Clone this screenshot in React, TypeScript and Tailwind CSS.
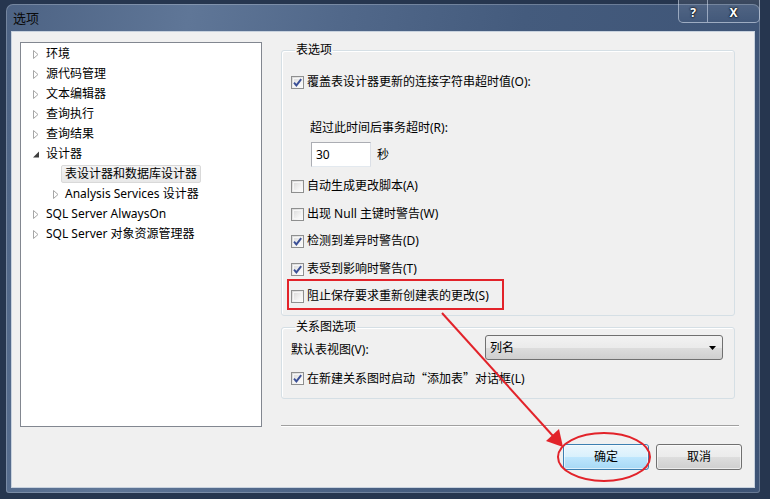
import React from "react";

const Check = ({ checked }: { checked?: boolean }) => (
  <span className="relative flex h-[13px] w-[13px] shrink-0 items-center justify-center border border-[#8e8f8f] bg-[linear-gradient(135deg,#d8d8d8_0%,#f0f0f0_60%,#ffffff_100%)]">
    <span className="absolute inset-[1px] border border-[#f6f6f6] bg-[linear-gradient(135deg,#dedede,#fbfbfb)]" />
    {checked && (
      <svg width="11" height="11" viewBox="0 0 11 11" className="relative">
        <path d="M2 5.6 L4.4 8.4 L9.2 2.2" fill="none" stroke="#3a4f96" strokeWidth="1.9" strokeLinejoin="miter" />
      </svg>
    )}
  </span>
);

const CbRow = ({ checked, label, className = "" }: { checked?: boolean; label: React.ReactNode; className?: string }) => (
  <div className={"flex h-4 items-center gap-[3px] leading-4 " + className}>
    <Check checked={checked} />
    <span>{label}</span>
  </div>
);

const Closed = () => (
  <svg width="6" height="9" viewBox="0 0 6 9" className="shrink-0">
    <path d="M0.5 0.5 L5 4.5 L0.5 8.5 Z" fill="#ffffff" stroke="#a6a6a6" strokeWidth="1" />
  </svg>
);
const Open = () => (
  <svg width="6" height="9" viewBox="0 0 6 9" className="shrink-0">
    <path d="M6 1.5 L6 7.5 L0 7.5 Z" fill="#3e3e3e" />
  </svg>
);

const TreeRow = ({ label, open }: { label: string; open?: boolean }) => (
  <div className="flex h-5 items-center pl-[12px]">
    {open ? <Open /> : <Closed />}
    <span className="ml-[7px]">{label}</span>
  </div>
);

export default function App() {
  return (
    <div className="relative h-[499px] w-[770px] overflow-hidden bg-[#26364f] pl-[6px] pt-[4px] font-['Noto_Sans','Noto_Sans_CJK_SC',sans-serif] text-[12px] text-black">
      <div className="flex h-[489px] w-[754px] flex-col rounded-t-[7px] rounded-b-[3px] bg-[linear-gradient(100deg,#4d6384_0%,#5f7697_22%,#51688a_40%,#445b7d_62%,#3d5375_100%)] shadow-[inset_0_0_0_1px_rgba(255,255,255,0.22)]">
        {/* title bar */}
        <div className="flex h-[27px] items-start justify-between">
          <span className="pl-[7px] pt-[5px] text-[13px] leading-[18px] text-[#0a0a0a]">选项</span>
          <div className="-mt-[4px] mr-0 flex h-[23px] overflow-hidden rounded-b-[5px] border border-t-0 border-[rgba(220,230,245,0.55)] bg-[linear-gradient(180deg,rgba(255,255,255,0.10),rgba(255,255,255,0.02))]">
            <span className="flex w-[29px] items-center justify-center border-r border-[rgba(220,230,245,0.55)] pt-[3px] text-[12px] font-bold text-white [text-shadow:0_0_2px_#000,0_0_2px_#000]">?</span>
            <span className="flex w-[51px] items-center justify-center pt-[3px] text-[12px] font-bold text-white [text-shadow:0_0_2px_#000,0_0_2px_#000]">X</span>
          </div>
        </div>
        {/* client */}
        <div className="ml-[5px] h-[457px] w-[744px] border border-[#c8d2de] bg-[#f0f0f0]">
          <div className="flex pl-[8px] pt-[10px]">
            {/* tree */}
            <div className="h-[385px] w-[242px] border border-[#828790] bg-white pt-[1px] leading-4">
              <TreeRow label="环境" />
              <TreeRow label="源代码管理" />
              <TreeRow label="文本编辑器" />
              <TreeRow label="查询执行" />
              <TreeRow label="查询结果" />
              <TreeRow label="设计器" open />
              <div className="flex h-5 items-center pl-[32px]">
                <span className="w-[6px]" />
                <span className="ml-[2px] flex h-[18px] items-center rounded-[2px] border border-[#d9d9d9] bg-[linear-gradient(180deg,#f4f4f4,#e8e8e8)] px-[3px]">表设计器和数据库设计器</span>
              </div>
              <div className="flex h-5 items-center pl-[32px]">
                <Closed />
                <span className="ml-[6px]">Analysis Services 设计器</span>
              </div>
              <TreeRow label="SQL Server AlwaysOn" />
              <TreeRow label="SQL Server 对象资源管理器" />
            </div>
            {/* right */}
            <div className="ml-[19px] w-[458px]">
              <fieldset className="w-[454px] rounded-[3px] border border-[#d5dfe5] pb-[11px] pl-[9px] shadow-[inset_1px_1px_0_#ffffff]">
                <legend className="ml-[4px] px-[1px] leading-4">表选项</legend>
                <CbRow checked label="覆盖表设计器更新的连接字符串超时值(O):" className="mt-[16px]" />
                <div className="mt-[30px] pl-[19px] leading-4">超过此时间后事务超时(R):</div>
                <div className="mt-[6px] flex items-center pl-[20px]">
                  <div className="flex h-[25px] w-[60px] items-center border border-[#abadb3] border-b-[#e3e9ef] border-r-[#dbdfe6] bg-white pl-[4px]">30</div>
                  <span className="ml-[6px]">秒</span>
                </div>
                <CbRow label="自动生成更改脚本(A)" className="mt-[11px]" />
                <CbRow label="出现 Null 主键时警告(W)" className="mt-[12px]" />
                <CbRow checked label="检测到差异时警告(D)" className="mt-[11px]" />
                <CbRow checked label="表受到影响时警告(T)" className="mt-[12px]" />
                <div className="relative mt-[11px]">
                  <CbRow label="阻止保存要求重新创建表的更改(S)" />
                  <div className="absolute left-[-4px] top-[-9px] h-[31px] w-[217px] border-2 border-[#e2232a]" />
                </div>
              </fieldset>
              <fieldset className="mt-[3px] w-[454px] rounded-[3px] border border-[#d5dfe5] pb-[12px] pl-[9px] pr-[11px] shadow-[inset_1px_1px_0_#ffffff]">
                <legend className="ml-[4px] px-[1px] leading-4">关系图选项</legend>
                <div className="flex h-[25px] items-center justify-between">
                  <span className="mt-[4px] leading-4">默认表视图(V):</span>
                  <div className="flex h-[25px] w-[238px] items-center justify-between rounded-[3px] border border-[#707070] bg-[linear-gradient(180deg,#f2f2f2_0%,#ebebeb_50%,#dddddd_51%,#cfcfcf_100%)] pl-[4px] pr-[6px]">
                    <span>列名</span>
                    <svg width="7" height="4" viewBox="0 0 7 4"><path d="M0 0 L7 0 L3.5 4 Z" fill="#000" /></svg>
                  </div>
                </div>
                <CbRow
                  checked
                  label={
                    <>
                      在新建关系图时启动<span className="font-['Noto_Sans_CJK_SC',sans-serif]">“</span>添加表<span className="font-['Noto_Sans_CJK_SC',sans-serif]">”</span>对话框(L)
                    </>
                  }
                  className="mt-[10px]"
                />
              </fieldset>
              <div className="mt-[26px] h-[2px] w-[458px] border-t border-[#a0a0a0] bg-white" />
            </div>
          </div>
          {/* buttons */}
          <div className="mt-[17px] flex justify-end gap-[7px] pr-[12px]">
            <button className="flex h-[26px] w-[86px] items-center justify-center rounded-[3px] border border-[#3c7fb1] bg-[linear-gradient(180deg,#eaf6fd_0%,#d9f0fc_50%,#bee6fd_51%,#a7d9f5_100%)] shadow-[inset_0_0_0_1px_rgba(255,255,255,0.6)]">确定</button>
            <button className="flex h-[26px] w-[86px] items-center justify-center rounded-[3px] border border-[#707070] bg-[linear-gradient(180deg,#f2f2f2_0%,#ebebeb_50%,#dddddd_51%,#cfcfcf_100%)] shadow-[inset_0_0_0_1px_rgba(255,255,255,0.6)]">取消</button>
          </div>
        </div>
      </div>
      <svg className="pointer-events-none absolute left-0 top-0" width="770" height="499" viewBox="0 0 770 499">
        <line x1="442" y1="313" x2="553" y2="436" stroke="#e2232a" strokeWidth="2" />
        <path d="M563 447 L546 441 L559 429 Z" fill="#e2232a" />
        <ellipse cx="604" cy="457" rx="46" ry="24" fill="none" stroke="#e2232a" strokeWidth="2" />
      </svg>
    </div>
  );
}
